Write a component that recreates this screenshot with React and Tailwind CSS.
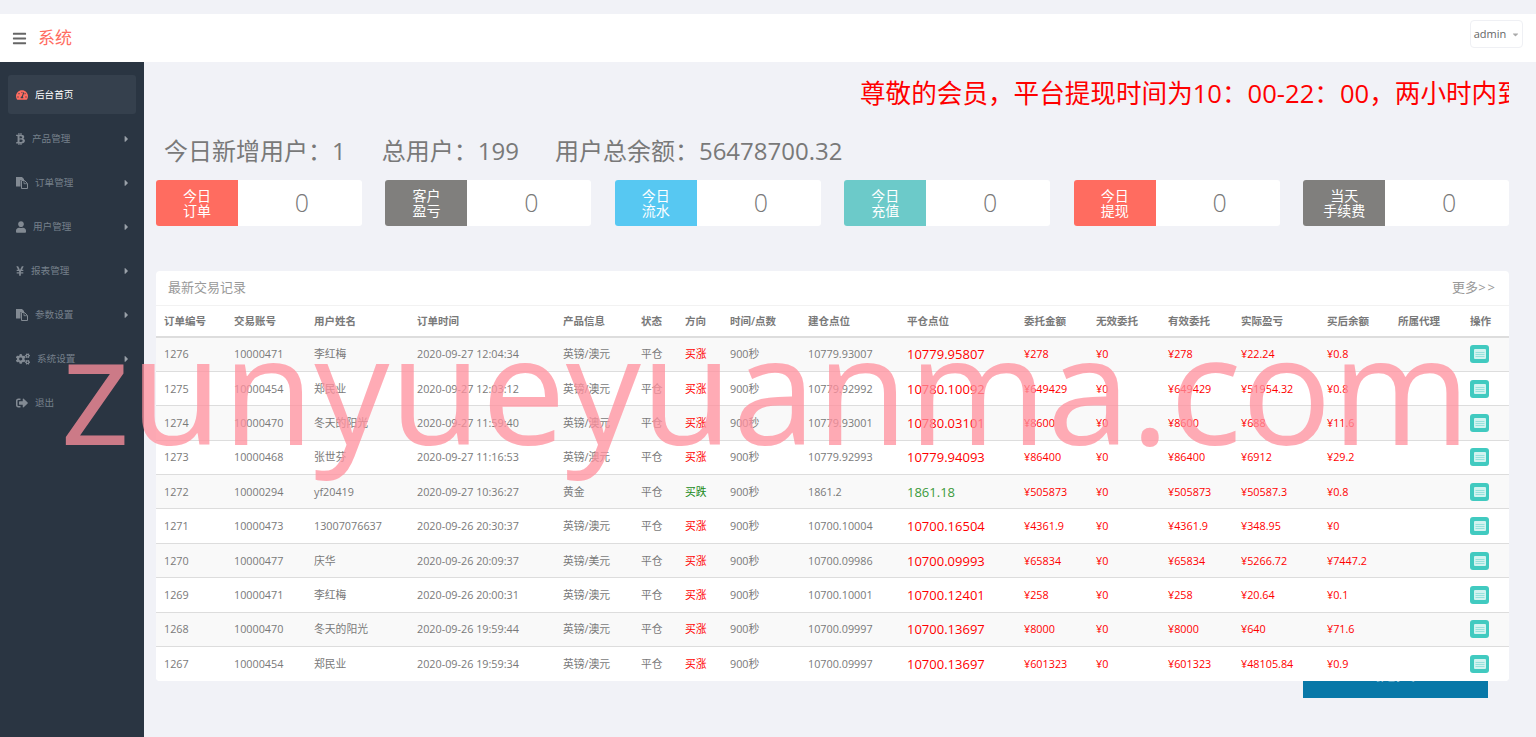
import React from 'react'
import {
  FaBars,
  FaBtc,
  FaCaretDown,
  FaCaretRight,
  FaCogs,
  FaSignOutAlt,
  FaTachometerAlt,
  FaUser,
  FaYenSign,
} from 'react-icons/fa'

const FONT = "font-['Open_Sans','Noto_Sans_CJK_SC',sans-serif]"

// two sheets: solid one behind, outlined one in front
const FilesIcon = ({ className }) => (
  <svg viewBox="0 0 12 12" className={className}>
    <path d="M0 0h6l2 2v1H4.5v6.5H0z" fill="currentColor" />
    <path d="M5.5 3.5h3l3 3v5h-6z" fill="none" stroke="currentColor" strokeWidth="1" />
    <path d="M8 3.5v3.2h3.2" fill="none" stroke="currentColor" strokeWidth="0.8" />
  </svg>
)

const DetailIcon = () => (
  <svg viewBox="0 0 12 10" className="h-[10px] w-[12px]">
    <rect width="12" height="10" rx="1" fill="#d3f3f0" />
    <path d="M1.5 3.5h9M1.5 5.5h9M1.5 7.5h9" stroke="#8fe0d9" strokeWidth="0.9" />
  </svg>
)

const navItems = [
  { label: '后台首页', Icon: FaTachometerAlt, iconClass: 'w-[12px]', active: true },
  { label: '产品管理', Icon: FaBtc, iconClass: 'w-[9px]', arrow: true },
  { label: '订单管理', Icon: FilesIcon, iconClass: 'w-[12px]', arrow: true },
  { label: '用户管理', Icon: FaUser, iconClass: 'w-[10px]', arrow: true },
  { label: '报表管理', Icon: FaYenSign, iconClass: 'w-[8px]', arrow: true },
  { label: '参数设置', Icon: FilesIcon, iconClass: 'w-[12px]', arrow: true },
  { label: '系统设置', Icon: FaCogs, iconClass: 'w-[14px]', arrow: true },
  { label: '退出', Icon: FaSignOutAlt, iconClass: 'w-[12px]' },
]

const stats = [
  { top: '今日', bottom: '订单', color: 'bg-[#ff6c60]' },
  { top: '客户', bottom: '盈亏', color: 'bg-[#807f7d]' },
  { top: '今日', bottom: '流水', color: 'bg-[#57c8f2]' },
  { top: '今日', bottom: '充值', color: 'bg-[#6ccac9]' },
  { top: '今日', bottom: '提现', color: 'bg-[#ff6c60]' },
  { top: '当天', bottom: '手续费', color: 'bg-[#807f7d]' },
]

const columns = [
  ['订单编号', 'w-[70px]'],
  ['交易账号', 'w-[80px]'],
  ['用户姓名', 'w-[103px]'],
  ['订单时间', 'w-[146px]'],
  ['产品信息', 'w-[78px]'],
  ['状态', 'w-[44px]'],
  ['方向', 'w-[45px]'],
  ['时间/点数', 'w-[78px]'],
  ['建仓点位', 'w-[99px]'],
  ['平仓点位', 'w-[117px]'],
  ['委托金额', 'w-[72px]'],
  ['无效委托', 'w-[72px]'],
  ['有效委托', 'w-[73px]'],
  ['实际盈亏', 'w-[86px]'],
  ['买后余额', 'w-[71px]'],
  ['所属代理', 'w-[72px]'],
  ['操作', 'w-[47px]'],
]

const orders = [
  ['1276', '10000471', '李红梅', '2020-09-27 12:04:34', '英镑/澳元', '买涨', '10779.93007', '10779.95807', '278', '22.24', '0.8'],
  ['1275', '10000454', '郑民业', '2020-09-27 12:03:12', '英镑/澳元', '买涨', '10779.92992', '10780.10092', '649429', '51954.32', '0.8'],
  ['1274', '10000470', '冬天的阳光', '2020-09-27 11:59:40', '英镑/澳元', '买涨', '10779.93001', '10780.03101', '8600', '688', '11.6'],
  ['1273', '10000468', '张世芬', '2020-09-27 11:16:53', '英镑/澳元', '买涨', '10779.92993', '10779.94093', '86400', '6912', '29.2'],
  ['1272', '10000294', 'yf20419', '2020-09-27 10:36:27', '黄金', '买跌', '1861.2', '1861.18', '505873', '50587.3', '0.8'],
  ['1271', '10000473', '13007076637', '2020-09-26 20:30:37', '英镑/澳元', '买涨', '10700.10004', '10700.16504', '4361.9', '348.95', '0'],
  ['1270', '10000477', '庆华', '2020-09-26 20:09:37', '英镑/美元', '买涨', '10700.09986', '10700.09993', '65834', '5266.72', '7447.2'],
  ['1269', '10000471', '李红梅', '2020-09-26 20:00:31', '英镑/澳元', '买涨', '10700.10001', '10700.12401', '258', '20.64', '0.1'],
  ['1268', '10000470', '冬天的阳光', '2020-09-26 19:59:44', '英镑/澳元', '买涨', '10700.09997', '10700.13697', '8000', '640', '71.6'],
  ['1267', '10000454', '郑民业', '2020-09-26 19:59:34', '英镑/澳元', '买涨', '10700.09997', '10700.13697', '601323', '48105.84', '0.9'],
]

const Sidebar = () => (
  <aside className="w-[144px] shrink-0 bg-[#2a3542] px-2 pt-[13px]">
    {navItems.map(({ label, Icon, iconClass, active, arrow }) => (
      <div
        key={label}
        className={`mb-[5px] flex h-[39px] items-center gap-[7px] rounded-[3px] pl-2 pr-[7px] pt-[1px] text-[9.6px] ${
          active ? 'bg-[#35404d] text-white' : 'text-[#76808b]'
        }`}
      >
        <Icon className={`h-[12px] shrink-0 ${iconClass} ${active ? 'text-[#ff6c60]' : 'text-[#828a93]'}`} />
        <span>{label}</span>
        {arrow && <FaCaretRight className="ml-auto h-[10px] w-[5px] text-[#9aa1a9]" />}
      </div>
    ))}
  </aside>
)

const StatCard = ({ top, bottom, color }) => (
  <div className="flex h-[46px] overflow-hidden rounded-[3px] bg-white">
    <div className={`flex w-[82px] shrink-0 flex-col items-center justify-center text-[14px] leading-[15px] text-white ${color}`}>
      <span>{top}</span>
      <span>{bottom}</span>
    </div>
    <div className="flex flex-1 items-center justify-center pl-[4px] text-[25px] font-light text-[#797979]">0</div>
  </div>
)

const OrderRow = ({ order, index }) => {
  const [id, account, name, time, product, direction, open, close, amount, profit, balance] = order
  const up = direction === '买涨'
  return (
    <tr className={`h-[34.4px] border-b border-[#ddd] last:border-b-0 ${index % 2 === 0 ? 'bg-[#f9f9f9]' : 'bg-white'}`}>
      <td className="pl-2">{id}</td>
      <td className="pl-2">{account}</td>
      <td className="pl-2">{name}</td>
      <td className="pl-2">{time}</td>
      <td className="pl-2">{product}</td>
      <td className="pl-2">平仓</td>
      <td className={`pl-2 ${up ? 'text-[#f00]' : 'text-[#1a8a1a]'}`}>{direction}</td>
      <td className="pl-2">900秒</td>
      <td className="pl-2">{open}</td>
      <td className={`pl-2 text-[13px] ${up ? 'text-[#f00]' : 'text-[#3c9b3c]'}`}>{close}</td>
      <td className="pl-2 text-[#f00]">¥{amount}</td>
      <td className="pl-2 text-[#f00]">¥0</td>
      <td className="pl-2 text-[#f00]">¥{amount}</td>
      <td className="pl-2 text-[#f00]">¥{profit}</td>
      <td className="pl-2 text-[#f00]">¥{balance}</td>
      <td className="pl-2" />
      <td className="pl-2">
        <button className="flex h-[18px] w-[19px] items-center justify-center rounded-[3px] bg-[#41cac0]">
          <DetailIcon />
        </button>
      </td>
    </tr>
  )
}

export default function App() {
  return (
    <div className={`relative flex h-screen flex-col overflow-hidden bg-[#f1f2f7] pt-[14px] text-[#797979] ${FONT}`}>
      {/* top bar */}
      <header className="flex h-[48px] shrink-0 items-center bg-white pl-3 pr-[13px]">
        <FaBars className="h-[15px] w-[15px] text-[#666]" />
        <span className="ml-[11px] text-[17px] text-[#ff6c60]">系统</span>
        <button className="-mt-[8px] ml-auto flex h-[28px] w-[53px] items-center justify-center gap-[6px] rounded-[4px] border border-[#eff0f4] pt-[1px] text-[11px] text-[#666]">
          admin
          <FaCaretDown className="h-[9px] w-[7px] text-[#aaa]" />
        </button>
      </header>

      <div className="flex min-h-0 flex-1">
        <Sidebar />

        <main className="min-w-0 flex-1 pl-3 pr-[27px]">
          {/* scrolling notice, cut off at the right edge */}
          <div className="mt-[17px] h-[30px] overflow-hidden whitespace-nowrap pl-[704px] text-[25.6px] leading-[30px] text-[#f00]">
            尊敬的会员，平台提现时间为10：00-22：00，两小时内到账
          </div>

          <div className="mt-[24px] flex h-[36px] items-center gap-[36px] pl-2 text-[24px] leading-[36px] text-[#797979]">
            <span>今日新增用户：1</span>
            <span>总用户：199</span>
            <span>用户总余额：56478700.32</span>
          </div>

          <div className="mt-[11px] grid grid-cols-6 gap-x-[23.6px]">
            {stats.map((stat, i) => (
              <StatCard key={i} {...stat} />
            ))}
          </div>

          {/* latest orders */}
          <section className="relative z-10 mt-[45px] overflow-hidden rounded-[4px] bg-white">
            <div className="flex h-[35px] items-center justify-between border-b border-[#f2f2f2] px-3 text-[13px] text-[#999]">
              <span>最新交易记录</span>
              <span>更多<span className="tracking-[2px]">&gt;&gt;</span></span>
            </div>
            <table className="w-full table-fixed border-collapse text-left text-[10.8px] leading-[14px]">
              <colgroup>
                {columns.map(([title, width]) => (
                  <col key={title} className={width} />
                ))}
              </colgroup>
              <thead>
                <tr className="h-[31px] border-b-2 border-[#ddd]">
                  {columns.map(([title]) => (
                    <th key={title} className="pl-2 text-[10.5px] font-semibold">{title}</th>
                  ))}
                </tr>
              </thead>
              <tbody>
                {orders.map((order, i) => (
                  <OrderRow key={order[0]} order={order} index={i} />
                ))}
              </tbody>
            </table>
          </section>

          {/* submit button sits partly behind the card */}
          <div className="-mt-[33px] flex justify-end pr-[21px]">
            <button className="h-[50px] w-[185px] bg-[#0878a8] text-[20px] text-white">提交</button>
          </div>
        </main>
      </div>

      {/* site watermark over the whole page */}
      <div className="pointer-events-none absolute left-[60px] top-[297px] z-20 whitespace-nowrap font-['Open_Sans',sans-serif] text-[150px] leading-[180px] text-[rgba(255,145,158,0.76)]">
        zunyueyuanma.com
      </div>
    </div>
  )
}
